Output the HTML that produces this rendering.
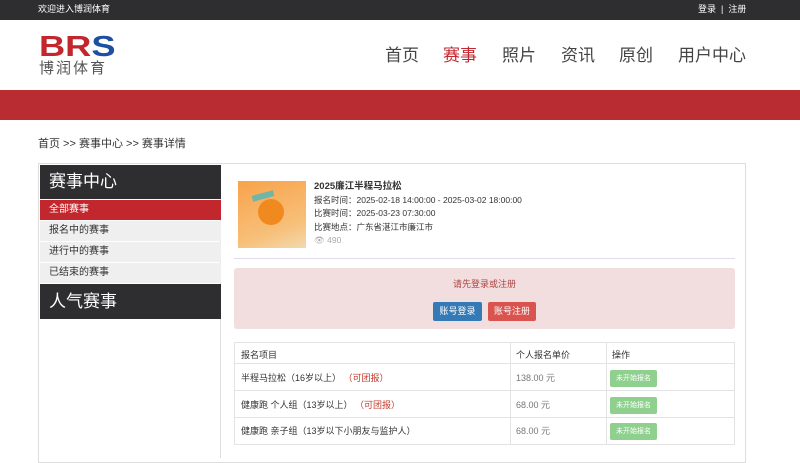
<!DOCTYPE html>
<html><head><meta charset="utf-8"><style>
*{margin:0;padding:0;box-sizing:border-box}
body{width:800px;height:458px;overflow:hidden;background:#fff;font-family:"Liberation Sans","Noto Sans CJK SC",sans-serif;color:#333;position:relative}
.a{position:absolute}
.top{left:0;top:0;width:800px;height:20px;background:#2e2e30;color:#fff;font-size:9px;line-height:14px}
.nav span{position:absolute;top:44px;font-size:17px;color:#444;line-height:24px}
.band{left:0;top:90px;width:800px;height:30px;background:#b92c32}
.side div{position:absolute;left:0;width:181px}
.tbl{left:234px;top:342px;width:501px;border:1px solid #e3e3e3;font-size:9px}
.tbl .r{position:absolute;left:0;width:499px;border-top:1px solid #e3e3e3}
.tbl .c{position:absolute;top:0;bottom:0;border-left:1px solid #e3e3e3}
.gb{position:absolute;left:375px;width:47px;height:17px;background:#8fd08f;color:#fff;font-size:7px;line-height:17px;text-align:center;border-radius:2px}
</style></head><body>
<div class="a top"><span class="a" style="left:38px;top:2px">欢迎进入博润体育</span><span class="a" style="left:698px;top:2px">登录 &nbsp;|&nbsp; 注册</span></div>
<div class="a" style="left:39px;top:33px;font:bold 29px/28px 'Liberation Sans',sans-serif;transform:scaleX(1.25);transform-origin:left"><span style="color:#c2272e">BR</span><span style="color:#1f4fa0">S</span></div>
<div class="a" style="left:39px;top:60px;font-size:15px;color:#555;letter-spacing:2px;line-height:18px">博润体育</div>
<div class="nav"><span style="left:385px">首页</span><span style="left:443px;color:#c2272e">赛事</span><span style="left:502px">照片</span><span style="left:561px">资讯</span><span style="left:619px">原创</span><span style="left:678px">用户中心</span></div>
<div class="a band"></div>
<div class="a" style="left:38px;top:136px;font-size:11px;line-height:16px;color:#333">首页 &gt;&gt; 赛事中心 &gt;&gt; 赛事详情</div>
<div class="a" style="left:38px;top:163px;width:708px;height:300px;border:1px solid #ddd"></div>
<div class="a side" style="left:40px;top:165px;width:181px;height:293px;border-right:1px solid #ddd">
<div style="top:0;height:34px;background:#2e2e30;color:#fff;font-size:17px;line-height:34px;padding-left:9px">赛事中心</div>
<div style="top:35px;height:20px;background:#c2272e;color:#fff;font-size:10px;line-height:20px;padding-left:9px">全部赛事</div>
<div style="top:56px;height:20px;background:#efefef;font-size:10px;line-height:20px;padding-left:9px">报名中的赛事</div>
<div style="top:77px;height:20px;background:#efefef;font-size:10px;line-height:20px;padding-left:9px">进行中的赛事</div>
<div style="top:98px;height:20px;background:#efefef;font-size:10px;line-height:20px;padding-left:9px">已结束的赛事</div>
<div style="top:119px;height:35px;background:#2e2e30;color:#fff;font-size:17px;line-height:35px;padding-left:9px">人气赛事</div>
</div>
<div class="a" style="left:238px;top:181px;width:68px;height:67px;background:linear-gradient(160deg,#f9a24a,#f7c07a 70%,#f3d9b0)"><div class="a" style="left:20px;top:18px;width:26px;height:26px;border-radius:50%;background:#f08a1e"></div><div class="a" style="left:14px;top:12px;width:22px;height:6px;background:#6fb6a8;transform:rotate(-15deg)"></div></div>
<div class="a" style="left:314px;top:180px;font-size:8.5px;line-height:13.5px;color:#333"><b style="font-size:9.5px">2025廉江半程马拉松</b><br>报名时间：2025-02-18 14:00:00 - 2025-03-02 18:00:00<br>比赛时间：2025-03-23 07:30:00<br>比赛地点：广东省湛江市廉江市<br><span style="color:#aaa">👁 490</span></div>
<div class="a" style="left:234px;top:258px;width:501px;height:1px;background:#dde"></div>
<div class="a" style="left:234px;top:268px;width:501px;height:61px;background:#f2dede;border-radius:3px"><div class="a" style="left:0;width:501px;top:9px;text-align:center;font-size:9px;color:#a94442">请先登录或注册</div>
<div class="a" style="left:199px;top:34px;width:49px;height:19px;background:#337ab7;color:#fff;font-size:9px;line-height:19px;text-align:center;border-radius:2px">账号登录</div>
<div class="a" style="left:254px;top:34px;width:48px;height:19px;background:#d9534f;color:#fff;font-size:9px;line-height:19px;text-align:center;border-radius:2px">账号注册</div></div>
<div class="a tbl" style="height:103px">
<div class="c" style="left:275px"></div><div class="c" style="left:371px"></div>
<span class="a" style="left:6px;top:5px">报名项目</span><span class="a" style="left:281px;top:5px">个人报名单价</span><span class="a" style="left:377px;top:5px">操作</span>
<div class="r" style="top:20px"></div><div class="r" style="top:47px"></div><div class="r" style="top:74px"></div>
<span class="a" style="left:6px;top:28px">半程马拉松（16岁以上） <span style="color:#c0392b">（可团报）</span></span><span class="a" style="left:281px;top:28px;color:#777">138.00 元</span><div class="gb" style="top:27px">未开始报名</div>
<span class="a" style="left:6px;top:55px">健康跑 个人组（13岁以上） <span style="color:#c0392b">（可团报）</span></span><span class="a" style="left:281px;top:55px;color:#777">68.00 元</span><div class="gb" style="top:54px">未开始报名</div>
<span class="a" style="left:6px;top:81px">健康跑 亲子组（13岁以下小朋友与监护人）</span><span class="a" style="left:281px;top:81px;color:#777">68.00 元</span><div class="gb" style="top:80px">未开始报名</div>
</div>
</body></html>
